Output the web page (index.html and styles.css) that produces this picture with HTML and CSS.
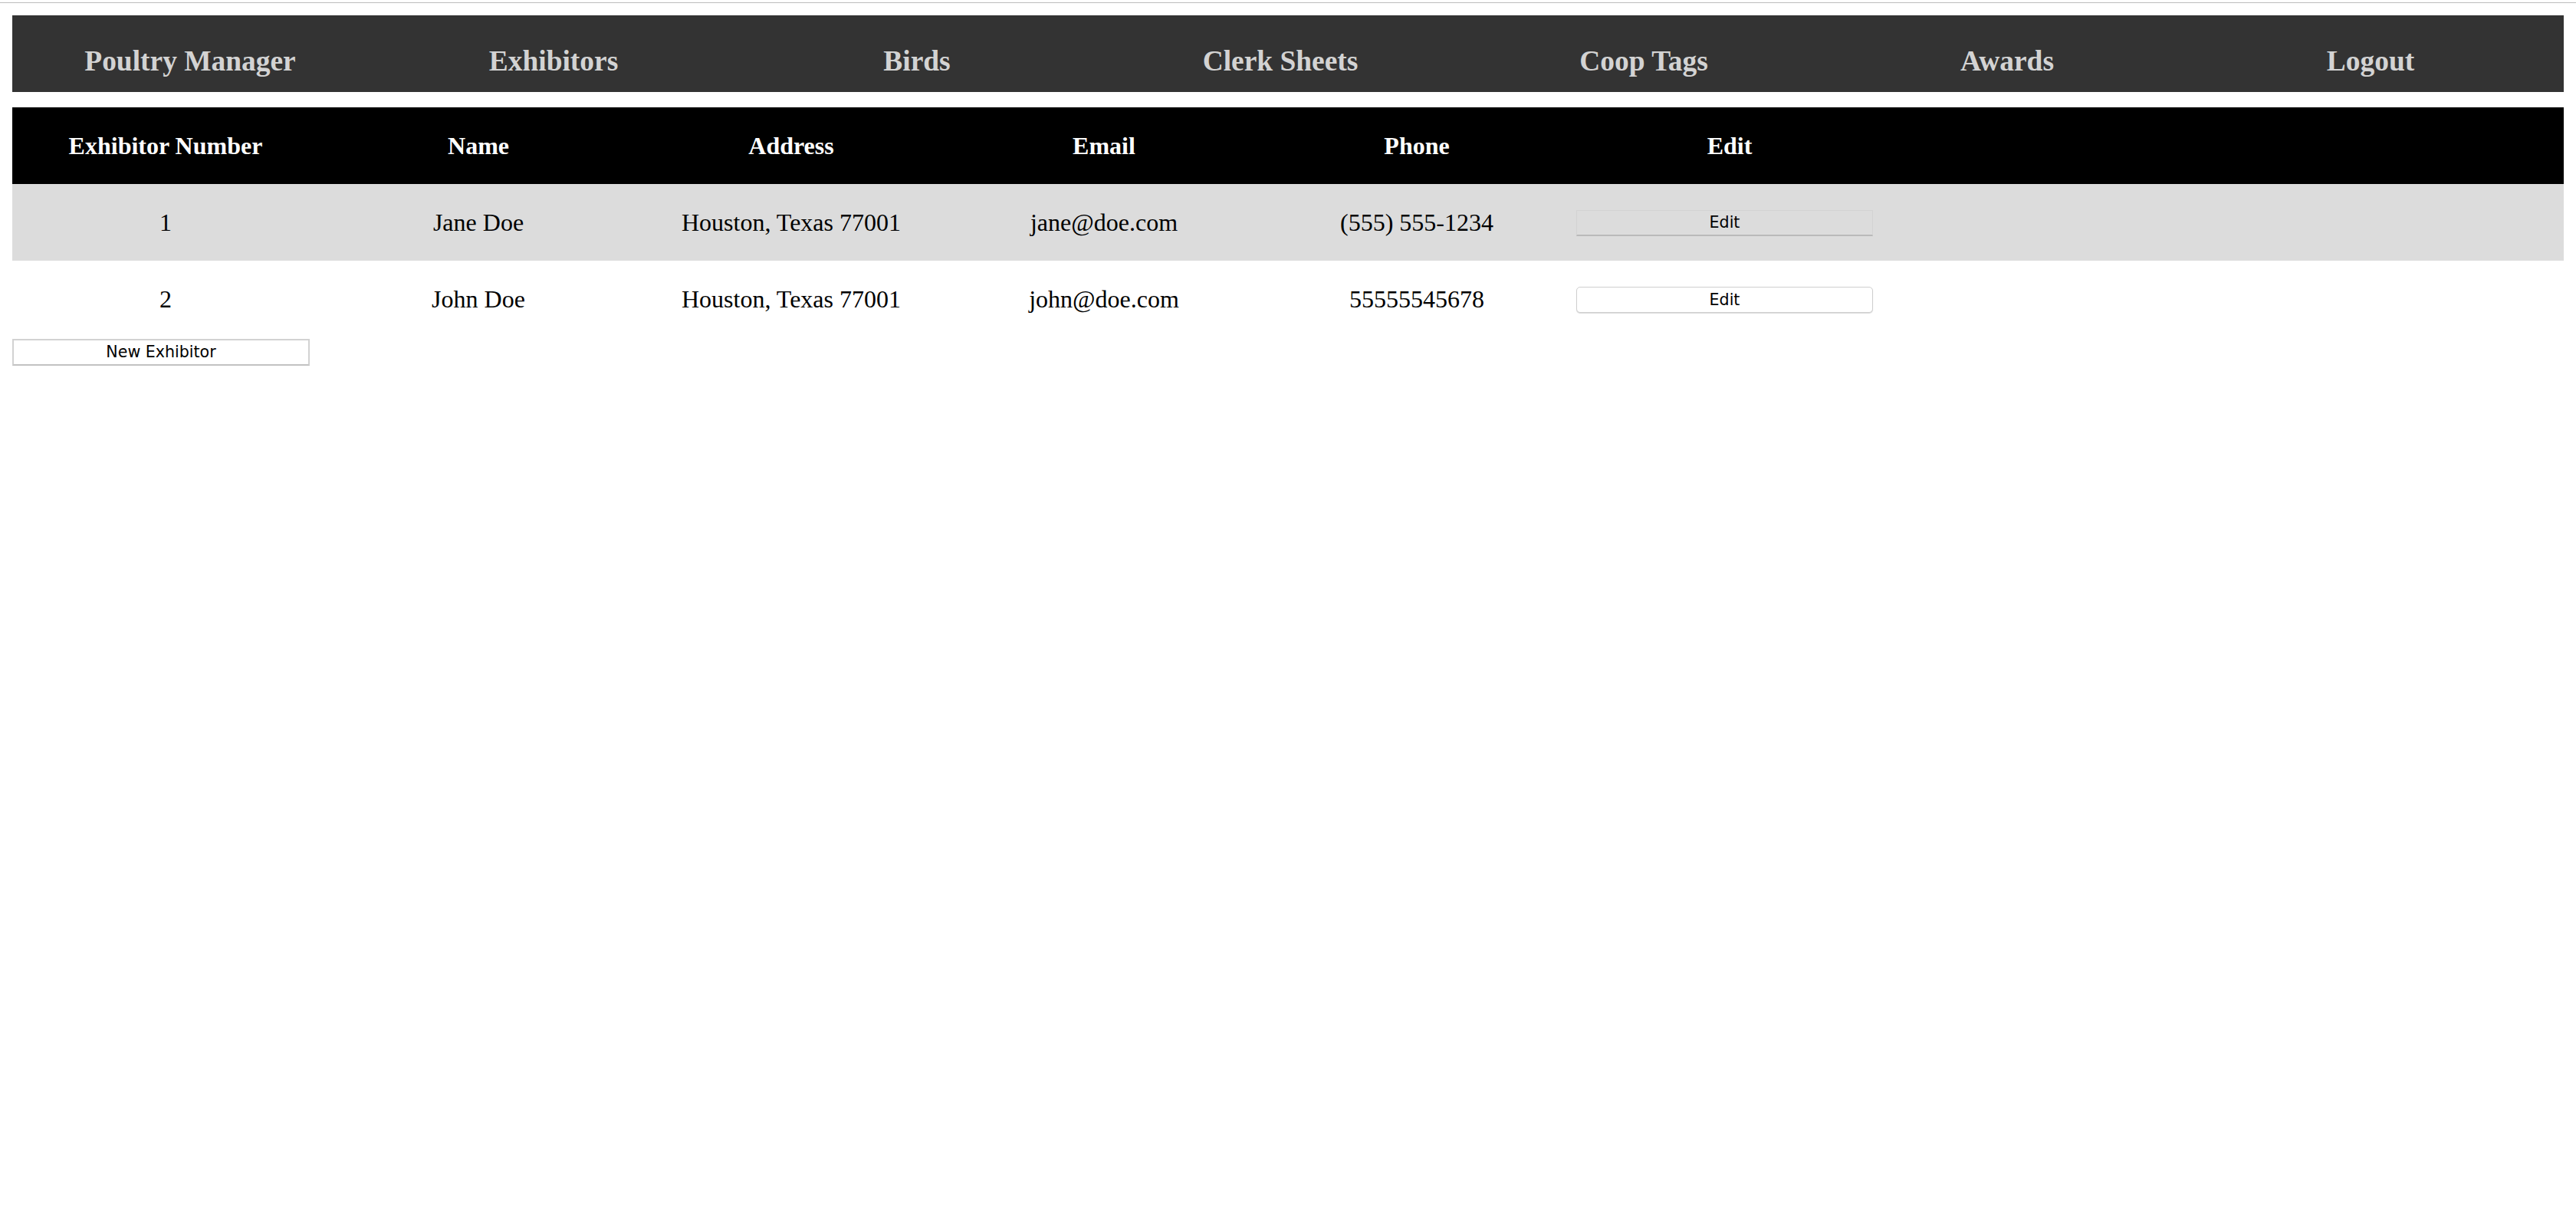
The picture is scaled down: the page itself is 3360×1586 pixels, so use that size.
FILE: index.html
```html
<!DOCTYPE html>
<html lang="en">
<head>
<meta charset="utf-8">
<title>Poultry Manager - Exhibitors</title>
<link rel="stylesheet" href="styles.css">
</head>
<body>
<div class="chrome"></div>
<div class="page">
  <nav class="topnav">
    <ul class="nav-list">
      <li class="nav-item">Poultry Manager</li>
      <li class="nav-item">Exhibitors</li>
      <li class="nav-item">Birds</li>
      <li class="nav-item">Clerk Sheets</li>
      <li class="nav-item">Coop Tags</li>
      <li class="nav-item">Awards</li>
      <li class="nav-item">Logout</li>
    </ul>
  </nav>
  <table class="exhibitors">
    <colgroup>
      <col class="c"><col class="c"><col class="c"><col class="c"><col class="c"><col class="c"><col class="rest">
    </colgroup>
    <thead>
      <tr>
        <th>Exhibitor Number</th>
        <th>Name</th>
        <th>Address</th>
        <th>Email</th>
        <th>Phone</th>
        <th>Edit</th>
        <th></th>
      </tr>
    </thead>
    <tbody>
      <tr class="alt">
        <td>1</td>
        <td>Jane Doe</td>
        <td>Houston, Texas 77001</td>
        <td>jane@doe.com</td>
        <td>(555) 555-1234</td>
        <td><button class="btn btn-cell btn-flat">Edit</button></td>
        <td></td>
      </tr>
      <tr>
        <td>2</td>
        <td>John Doe</td>
        <td>Houston, Texas 77001</td>
        <td>john@doe.com</td>
        <td>55555545678</td>
        <td><button class="btn btn-cell btn-round">Edit</button></td>
        <td></td>
      </tr>
    </tbody>
  </table>
  <button class="btn btn-new">New Exhibitor</button>
</div>
</body>
</html>
```

FILE: styles.css
```css
html, body {
  margin: 0;
  padding: 0;
  background: #fff;
}

body {
  font-family: "Liberation Serif", "Times New Roman", serif;
  color: #000;
}

.chrome {
  height: 3px;
  border-bottom: 1px solid #bdbdbd;
}

.page {
  padding: 16px;
}

.topnav {
  height: 100px;
  box-sizing: border-box;
  background: #333;
  padding-top: 38px;
  margin-bottom: 20px;
  overflow: hidden;
}

.nav-list {
  display: flex;
  margin: 0 0 0 -5px;
  padding: 0;
  list-style: none;
}

.nav-item {
  flex: 0 0 474px;
  text-align: center;
  font-size: 37.44px;
  font-weight: bold;
  line-height: normal;
  color: #d3d3d3;
}

.exhibitors {
  width: 100%;
  border-collapse: collapse;
  border-spacing: 0;
  table-layout: fixed;
}

.exhibitors col.c {
  width: 408px;
}

.exhibitors th,
.exhibitors td {
  height: 100px;
  padding: 0 8px 0 0;
  text-align: center;
  vertical-align: middle;
  font-size: 32px;
  white-space: nowrap;
}

.exhibitors thead tr {
  background: #000;
  color: #fff;
}

.exhibitors th {
  font-weight: bold;
}

.exhibitors tr.alt {
  background: #dcdcdc;
}

.btn {
  font-family: "DejaVu Sans", "Liberation Sans", sans-serif;
  font-size: 20.6px;
  color: #000;
  width: 387px;
  height: 34px;
  padding: 0;
  margin: 0;
  box-sizing: border-box;
  line-height: 1;
}

.btn-cell {
  display: block;
  margin-top: 2px;
}

.btn-flat {
  background: #dcdcdc;
  border: 1px solid #d3d3d3;
  border-bottom: 2px solid #bababa;
  border-radius: 0;
}

.btn-round {
  background: #fff;
  border: 1px solid #cfcfcf;
  border-radius: 5px;
  box-shadow: 0 1px 1px rgba(0, 0, 0, 0.15);
}

.btn-new {
  display: block;
  margin-top: 2px;
  height: 35px;
  width: 388px;
  background: #fff;
  border: 2px solid #d2d2d2;
  border-bottom-color: #c2c2c2;
  border-radius: 0;
}
```
